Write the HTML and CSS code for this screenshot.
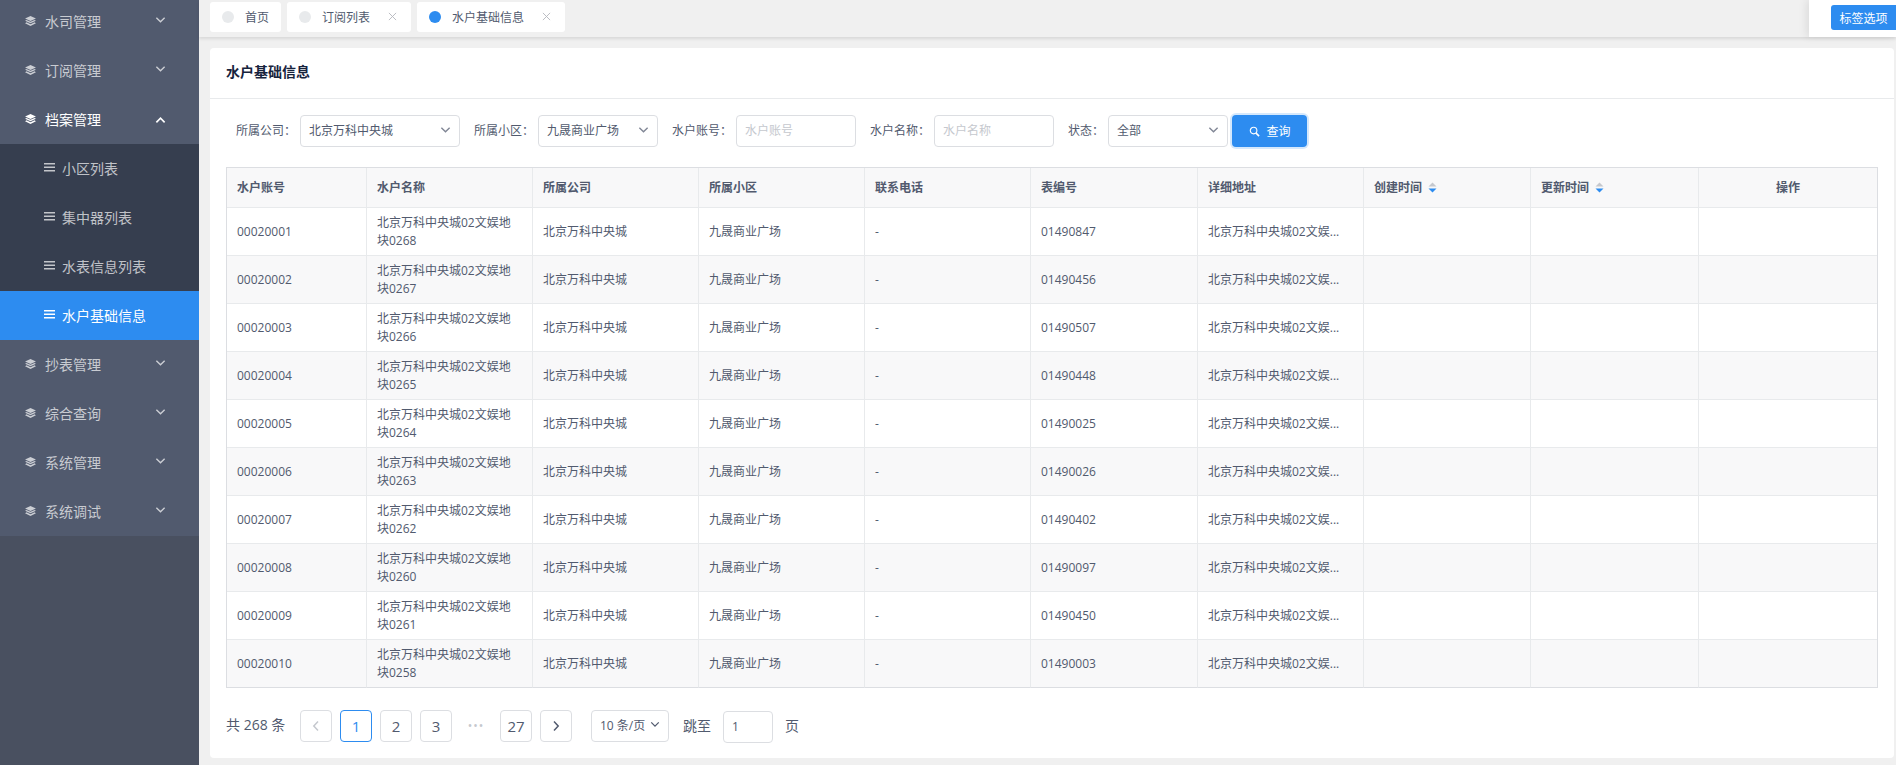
FILE: index.html
```html
<!DOCTYPE html>
<html lang="zh-CN">

<head>
    <meta charset="UTF-8">
    <title>水户基础信息</title>
    <link rel="stylesheet" href="styles.css">
</head>

<body>
    <svg class="sprites" width="0" height="0">
        <symbol id="i-layers" viewBox="0 0 12 11">
            <path d="M6 0 12 2.700 6 5.400 0 2.700z"/>
            <path d="M1.600 4.300 6 6.300l4.400-2L12 5.200 6 8 0 5.200z"/>
            <path d="M1.600 7 6 9l4.400-2L12 7.900 6 11 0 7.900z"/>
        </symbol>
        <symbol id="i-lines" viewBox="0 0 11 9">
            <path d="M0 0h11v1.600H0zM0 3.500h11v1.600H0zM0 7h11v1.600H0z"/>
        </symbol>
        <symbol id="i-down" viewBox="0 0 12 8">
            <path d="M1.500 1.500 6 6l4.500-4.500" fill="none" stroke="currentColor" stroke-width="1.500"/>
        </symbol>
        <symbol id="i-up" viewBox="0 0 12 8">
            <path d="M1.500 6.500 6 2l4.500 4.500" fill="none" stroke="currentColor" stroke-width="1.800"/>
        </symbol>
        <symbol id="i-close" viewBox="0 0 10 10">
            <path d="M1 1l8 8M9 1 1 9" fill="none" stroke="currentColor" stroke-width="1"/>
        </symbol>
        <symbol id="i-search" viewBox="0 0 12 12">
            <circle cx="5" cy="5" r="3.600" fill="none" stroke="currentColor" stroke-width="1.200"/>
            <path d="M7.700 7.700 11 11" fill="none" stroke="currentColor" stroke-width="1.800"/>
        </symbol>
        <symbol id="i-sort" viewBox="0 0 9 11">
            <path d="M4.500.5 8.500 4.500H.5z" fill="#c5c8ce"/>
            <path d="M4.500 10.500.5 6.500h8z" fill="#2d8cf0"/>
        </symbol>
        <symbol id="i-prev" viewBox="0 0 8 12">
            <path d="M6 1.500 1.800 6 6 10.500" fill="none" stroke="currentColor" stroke-width="1.500"/>
        </symbol>
        <symbol id="i-next" viewBox="0 0 8 12">
            <path d="M2 1.500 6.200 6 2 10.500" fill="none" stroke="currentColor" stroke-width="1.500"/>
        </symbol>
    </svg>

    <div class="app">
        <aside class="sidebar">
            <ul class="menu">
                <li class="menu-item"><svg class="icon-layers"><use href="#i-layers"/></svg>水司管理<svg class="icon-arrow"><use href="#i-down"/></svg></li>
                <li class="menu-item"><svg class="icon-layers"><use href="#i-layers"/></svg>订阅管理<svg class="icon-arrow"><use href="#i-down"/></svg></li>
                <li class="menu-item open"><svg class="icon-layers"><use href="#i-layers"/></svg>档案管理<svg class="icon-arrow"><use href="#i-up"/></svg></li>
                <li class="sub-item"><svg class="icon-lines"><use href="#i-lines"/></svg>小区列表</li>
                <li class="sub-item"><svg class="icon-lines"><use href="#i-lines"/></svg>集中器列表</li>
                <li class="sub-item"><svg class="icon-lines"><use href="#i-lines"/></svg>水表信息列表</li>
                <li class="sub-item active"><svg class="icon-lines"><use href="#i-lines"/></svg>水户基础信息</li>
                <li class="menu-item"><svg class="icon-layers"><use href="#i-layers"/></svg>抄表管理<svg class="icon-arrow"><use href="#i-down"/></svg></li>
                <li class="menu-item"><svg class="icon-layers"><use href="#i-layers"/></svg>综合查询<svg class="icon-arrow"><use href="#i-down"/></svg></li>
                <li class="menu-item"><svg class="icon-layers"><use href="#i-layers"/></svg>系统管理<svg class="icon-arrow"><use href="#i-down"/></svg></li>
                <li class="menu-item"><svg class="icon-layers"><use href="#i-layers"/></svg>系统调试<svg class="icon-arrow"><use href="#i-down"/></svg></li>
            </ul>
        </aside>

        <main class="main">
            <div class="tabs-bar">
                <div class="tabs">
                    <div class="tab"><span class="dot"></span>首页</div>
                    <div class="tab closable"><span class="dot"></span>订阅列表<svg class="icon-close"><use href="#i-close"/></svg></div>
                    <div class="tab closable"><span class="dot current"></span>水户基础信息<svg class="icon-close"><use href="#i-close"/></svg></div>
                </div>
                <div class="tabs-tools"><button class="tabs-button">标签选项</button></div>
            </div>

            <div class="content">
                <section class="card">
                    <h3 class="card-title">水户基础信息</h3>
                    <div class="card-body">
                        <form class="filters">
                            <div class="field">
                                <label>所属公司：</label>
                                <div class="control select wide">北京万科中央城<svg class="icon-arrow"><use href="#i-down"/></svg></div>
                            </div>
                            <div class="field">
                                <label>所属小区：</label>
                                <div class="control select">九晟商业广场<svg class="icon-arrow"><use href="#i-down"/></svg></div>
                            </div>
                            <div class="field">
                                <label>水户账号：</label>
                                <div class="control placeholder">水户账号</div>
                            </div>
                            <div class="field">
                                <label>水户名称：</label>
                                <div class="control placeholder">水户名称</div>
                            </div>
                            <div class="field last">
                                <label>状态：</label>
                                <div class="control select">全部<svg class="icon-arrow"><use href="#i-down"/></svg></div>
                            </div>
                            <button type="button" class="search-button"><svg class="icon-search"><use href="#i-search"/></svg>查询</button>
                        </form>

                        <table class="grid">
                            <colgroup>
                                <col class="w-140">
                                <col class="w-166">
                                <col class="w-166">
                                <col class="w-166">
                                <col class="w-166">
                                <col class="w-167">
                                <col class="w-166">
                                <col class="w-167">
                                <col class="w-168">
                                <col>
                            </colgroup>
                            <thead>
                                <tr>
                                    <th>水户账号</th>
                                    <th>水户名称</th>
                                    <th>所属公司</th>
                                    <th>所属小区</th>
                                    <th>联系电话</th>
                                    <th>表编号</th>
                                    <th>详细地址</th>
                                    <th>创建时间<svg class="icon-sort"><use href="#i-sort"/></svg></th>
                                    <th>更新时间<svg class="icon-sort"><use href="#i-sort"/></svg></th>
                                    <th class="center">操作</th>
                                </tr>
                            </thead>
                            <tbody>
                                <tr><td>00020001</td><td>北京万科中央城02文娱地块0268</td><td>北京万科中央城</td><td>九晟商业广场</td><td>-</td><td>01490847</td><td class="clip">北京万科中央城02文娱...</td><td></td><td></td><td></td></tr>
                                <tr><td>00020002</td><td>北京万科中央城02文娱地块0267</td><td>北京万科中央城</td><td>九晟商业广场</td><td>-</td><td>01490456</td><td class="clip">北京万科中央城02文娱...</td><td></td><td></td><td></td></tr>
                                <tr><td>00020003</td><td>北京万科中央城02文娱地块0266</td><td>北京万科中央城</td><td>九晟商业广场</td><td>-</td><td>01490507</td><td class="clip">北京万科中央城02文娱...</td><td></td><td></td><td></td></tr>
                                <tr><td>00020004</td><td>北京万科中央城02文娱地块0265</td><td>北京万科中央城</td><td>九晟商业广场</td><td>-</td><td>01490448</td><td class="clip">北京万科中央城02文娱...</td><td></td><td></td><td></td></tr>
                                <tr><td>00020005</td><td>北京万科中央城02文娱地块0264</td><td>北京万科中央城</td><td>九晟商业广场</td><td>-</td><td>01490025</td><td class="clip">北京万科中央城02文娱...</td><td></td><td></td><td></td></tr>
                                <tr><td>00020006</td><td>北京万科中央城02文娱地块0263</td><td>北京万科中央城</td><td>九晟商业广场</td><td>-</td><td>01490026</td><td class="clip">北京万科中央城02文娱...</td><td></td><td></td><td></td></tr>
                                <tr><td>00020007</td><td>北京万科中央城02文娱地块0262</td><td>北京万科中央城</td><td>九晟商业广场</td><td>-</td><td>01490402</td><td class="clip">北京万科中央城02文娱...</td><td></td><td></td><td></td></tr>
                                <tr><td>00020008</td><td>北京万科中央城02文娱地块0260</td><td>北京万科中央城</td><td>九晟商业广场</td><td>-</td><td>01490097</td><td class="clip">北京万科中央城02文娱...</td><td></td><td></td><td></td></tr>
                                <tr><td>00020009</td><td>北京万科中央城02文娱地块0261</td><td>北京万科中央城</td><td>九晟商业广场</td><td>-</td><td>01490450</td><td class="clip">北京万科中央城02文娱...</td><td></td><td></td><td></td></tr>
                                <tr><td>00020010</td><td>北京万科中央城02文娱地块0258</td><td>北京万科中央城</td><td>九晟商业广场</td><td>-</td><td>01490003</td><td class="clip">北京万科中央城02文娱...</td><td></td><td></td><td></td></tr>
                            </tbody>
                        </table>

                        <div class="pager">
                            <span class="pager-total">共 268 条</span>
                            <span class="page disabled"><svg class="icon-page"><use href="#i-prev"/></svg></span>
                            <span class="page current">1</span>
                            <span class="page">2</span>
                            <span class="page">3</span>
                            <span class="page ellipsis">•••</span>
                            <span class="page">27</span>
                            <span class="page"><svg class="icon-page"><use href="#i-next"/></svg></span>
                            <span class="pager-size">10 条/页<svg class="icon-arrow"><use href="#i-down"/></svg></span>
                            <span class="pager-jump">跳至<span class="pager-input">1</span>页</span>
                        </div>
                    </div>
                </section>
            </div>
        </main>
    </div>
</body>

</html>
```

FILE: styles.css
```css
* {
    box-sizing: border-box;
}

html,
body {
    margin: 0;
    height: 100%;
    overflow: hidden;
}

body {
    background: #f0f0f0;
    color: #515a6e;
    font-family: "Open Sans", "Noto Sans CJK SC", sans-serif;
    font-size: 12px;
}

.sprites {
    position: absolute;
}

.app {
    display: flex;
    height: 765px;
}

/* sidebar */
.sidebar {
    flex: 0 0 199px;
    background: #495060;
    overflow: hidden;
}

.menu {
    list-style: none;
    margin: -3px 0 0;
    padding: 0;
}

.menu-item,
.sub-item {
    display: flex;
    align-items: center;
    height: 49px;
    padding-bottom: 2px;
    font-size: 14px;
    color: rgba(255, 255, 255, 0.7);
}

.menu-item {
    background: #515a6e;
    padding-left: 25px;
}

.menu-item.open {
    color: #fff;
}

.sub-item {
    background: #363e4f;
    padding-left: 44px;
}

.sub-item.active {
    background: #2d8cf0;
    color: #fff;
}

.icon-layers {
    width: 11px;
    height: 10px;
    margin-right: 9px;
    fill: currentColor;
}

.icon-lines {
    width: 11px;
    height: 9px;
    margin-right: 7px;
    fill: currentColor;
}

.icon-arrow {
    width: 11px;
    height: 8px;
}

.menu-item .icon-arrow {
    margin-left: 54px;
    margin-top: -1px;
}

.menu-item.open .icon-arrow {
    margin-top: 3px;
}

/* tabs */
.main {
    flex: 1;
    display: flex;
    flex-direction: column;
    min-width: 0;
}

.tabs-bar {
    display: flex;
    justify-content: space-between;
    flex: 0 0 37px;
    background: #f0f0f0;
    box-shadow: 0 2px 3px rgba(0, 0, 0, 0.1);
    position: relative;
}

.tabs {
    display: flex;
    gap: 6px;
    padding: 2px 0 0 11px;
}

.tab {
    display: flex;
    align-items: center;
    height: 30px;
    padding: 0 12px;
    background: #fff;
    border-radius: 3px;
    color: #515a6e;
}

.tab.closable {
    padding-right: 14px;
}

.dot {
    width: 12px;
    height: 12px;
    margin-right: 11px;
    border-radius: 50%;
    background: #e8eaec;
}

.dot.current {
    background: #2d8cf0;
}

.icon-close {
    width: 9px;
    height: 9px;
    margin: -2px 0 0 18px;
    color: #b4b7bd;
}

.tabs-tools {
    flex: 0 0 87px;
    height: 37px;
    padding: 5px 0 0 22px;
    background: #fff;
    box-shadow: -3px 0 8px rgba(0, 0, 0, 0.08);
}

.tabs-button {
    width: 65px;
    height: 25px;
    padding: 0;
    border: 0;
    border-radius: 3px 0 0 3px;
    background: #2d8cf0;
    color: #fff;
    font: inherit;
}

/* card */
.content {
    flex: 1;
    padding: 11px 2px 7px 11px;
    min-height: 0;
}

.card {
    height: 100%;
    background: #fff;
    border-radius: 4px;
}

.card-title {
    height: 51px;
    margin: 0;
    padding: 0 16px;
    border-bottom: 1px solid #e8eaec;
    color: #17233d;
    font-size: 14px;
    font-weight: 700;
    line-height: 47px;
}

.card-body {
    padding: 16px;
}

/* filters */
.filters {
    display: flex;
    align-items: center;
    height: 32px;
    margin-bottom: 20px;
    padding-left: 10px;
}

.field {
    display: flex;
    align-items: center;
    margin-right: 14px;
}

.field.last {
    margin-right: 4px;
}

.field label {
    padding: 0 4px 2px 0;
}

.control {
    display: flex;
    align-items: center;
    justify-content: space-between;
    width: 120px;
    height: 32px;
    padding: 0 8px 2px;
    border: 1px solid #dcdee2;
    border-radius: 4px;
    background: #fff;
}

.control.wide {
    width: 160px;
}

.placeholder {
    color: #c5c8ce;
}

.select .icon-arrow {
    color: #808695;
    margin-top: -1px;
}

.search-button {
    display: flex;
    align-items: center;
    justify-content: center;
    width: 75px;
    height: 32px;
    padding: 0;
    border: 0;
    border-radius: 4px;
    background: #2d8cf0;
    box-shadow: 0 0 0 2px rgba(45, 140, 240, 0.2);
    color: #fff;
    font: inherit;
}

.icon-search {
    width: 11px;
    height: 11px;
    margin-right: 7px;
}

/* table */
.grid {
    width: 100%;
    table-layout: fixed;
    border-collapse: separate;
    border-spacing: 0;
    border: 1px solid #dcdee2;
    border-bottom: 0;
}

.w-140 { width: 140px; }
.w-166 { width: 166px; }
.w-167 { width: 167px; }
.w-168 { width: 168px; }

.grid th,
.grid td {
    padding: 0 10px;
    border-right: 1px solid #e8eaec;
    border-bottom: 1px solid #e8eaec;
    text-align: left;
    line-height: 18px;
}

.grid th:last-child,
.grid td:last-child {
    border-right: 0;
}

.grid tr:last-child td {
    border-bottom-color: #dcdee2;
}

.grid th {
    height: 40px;
    background: #f8f8f9;
    font-weight: 700;
}

.grid th.center {
    text-align: center;
}

.grid td {
    height: 48px;
}

.grid tbody tr:nth-child(even) td {
    background: #f8f8f9;
}

.grid td.clip {
    white-space: nowrap;
}

.icon-sort {
    width: 9px;
    height: 11px;
    margin-left: 6px;
    vertical-align: -1px;
}

/* pager */
.pager {
    display: flex;
    align-items: flex-start;
    height: 33px;
    margin-top: 22px;
    font-size: 14px;
    line-height: 32px;
}

.pager-total {
    width: 74px;
    line-height: 30px;
}

.page {
    display: flex;
    align-items: center;
    justify-content: center;
    width: 32px;
    height: 32px;
    margin-right: 8px;
    border: 1px solid #dcdee2;
    border-radius: 4px;
    background: #fff;
    font-size: 15px;
}

.page.current {
    border-color: #2d8cf0;
    color: #2d8cf0;
}

.page.disabled {
    color: #c5c8ce;
}

.page.ellipsis {
    border: 0;
    color: #c5c8ce;
    font-size: 12px;
    letter-spacing: 1px;
}

.icon-page {
    width: 8px;
    height: 12px;
}

.pager-size {
    display: flex;
    align-items: center;
    justify-content: space-between;
    width: 78px;
    height: 32px;
    margin-left: 11px;
    padding: 0 8px;
    border: 1px solid #dcdee2;
    border-radius: 4px;
    font-size: 12px;
}

.pager-size .icon-arrow {
    width: 10px;
    height: 7px;
    margin-top: -3px;
}

.pager-jump {
    display: flex;
    align-items: flex-start;
    margin-left: 14px;
}

.pager-input {
    display: flex;
    align-items: center;
    width: 50px;
    height: 32px;
    margin: 1px 12px 0;
    padding: 0 8px;
    border: 1px solid #dcdee2;
    border-radius: 4px;
    font-size: 12px;
}
```
